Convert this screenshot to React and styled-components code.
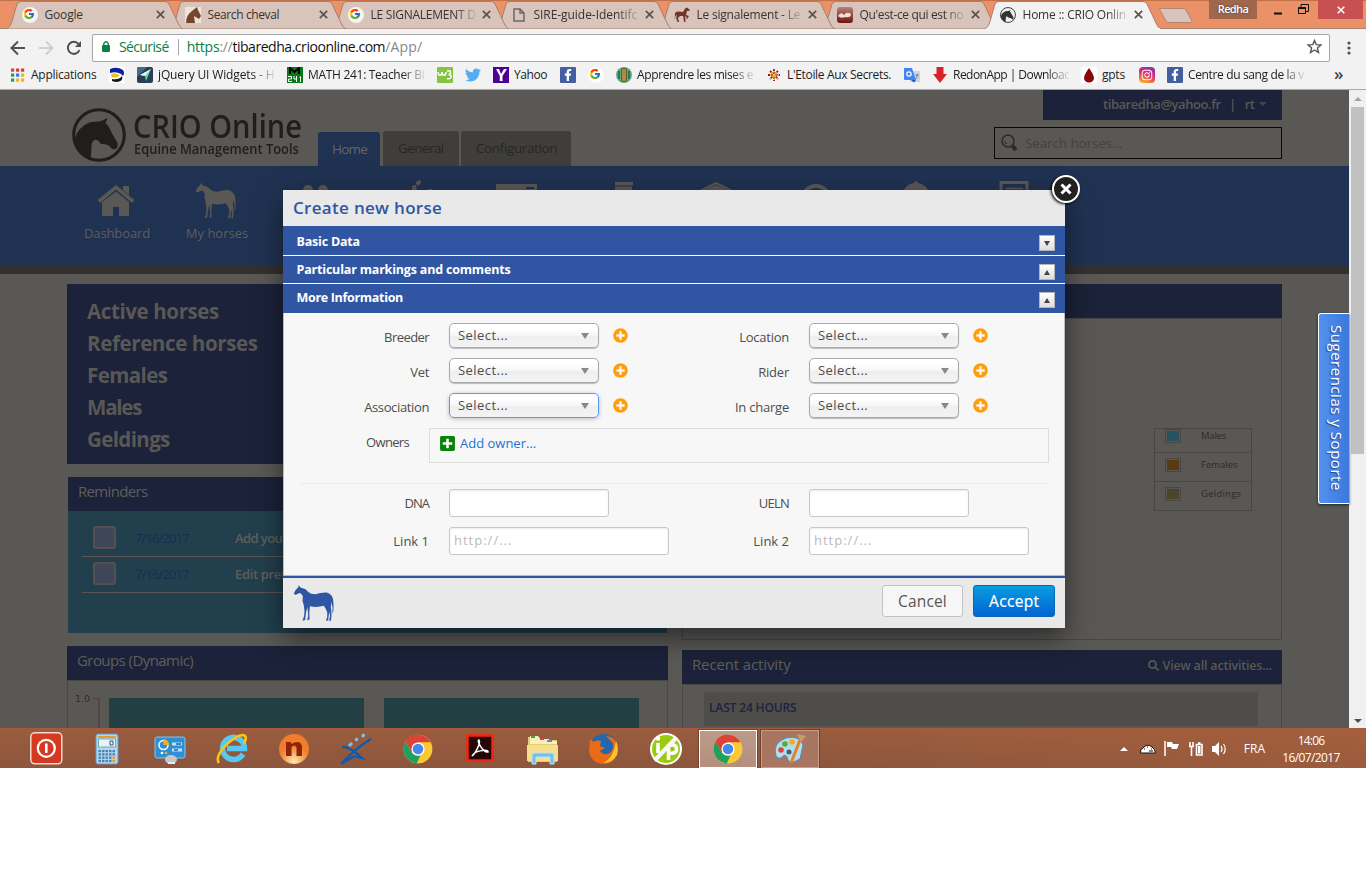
import React, { useLayoutEffect, useRef, useState } from 'react';
import styled, { createGlobalStyle, css } from 'styled-components';
import { FcGoogle } from 'react-icons/fc';
import { FaTwitter, FaFacebookF, FaPlusCircle, FaPlusSquare, FaSearch, FaInstagram } from 'react-icons/fa';

const Global = createGlobalStyle`
  * { box-sizing: border-box; }
  body { margin: 0; background: #fff; font-family: "Open Sans", "Noto Sans", sans-serif; }
  svg { display: block; flex: none; }
`;

/* ---------- text fitted to a known width ---------- */
const FitBox = styled.span`
  display: inline-block;
  white-space: nowrap;
  transform-origin: 0 50%;
`;
function Fit({ w, stretch, children }) {
  const ref = useRef(null);
  const [style, setStyle] = useState({});
  useLayoutEffect(() => {
    const natural = ref.current.offsetWidth;
    if (stretch) setStyle({ width: w, transform: `scaleX(${w / natural})` });
    else setStyle({ letterSpacing: `${(w - natural) / String(children).length}px` });
  }, []);
  return <FitBox ref={ref} style={style}>{children}</FitBox>;
}

/* ---------- drawings ---------- */
const Horse = ({ color, size = 40 }) => (
  <svg width={size} height={size * 0.9} viewBox="0 0 121 108" fill={color}>
    <path d="M17 0 L23 8 Q36 9 45 20 Q52 27 66 27 Q84 21 100 22 Q114 26 118 40 Q121 58 119 78 L116 84 Q118 66 114 50 Q110 64 113 76 Q115 92 112 105 L107 105 Q111 90 107 78 Q105 90 104 104 L97 105 Q103 94 101 80 Q96 68 91 61 Q70 67 50 62 L48 84 L49 101 L42 104 Q46 92 44 78 L42 65 L38 84 L36 103 L28 105 Q34 94 34 78 L32 60 Q26 46 29 33 Q25 24 20 23 L8 28 L2 26 Q6 13 15 7 Z" />
  </svg>
);
const HeadLogo = ({ size, dark, bg }) => (
  <svg width={size} height={size} viewBox="218 60 158 158">
    <circle cx="297" cy="139" r="74" fill={bg} stroke={dark} strokeWidth="9" />
    <path fill={dark} d="M226 150 Q236 116 270 102 L302 99 L322 89 L316 104 Q326 112 336 136 L351 162 Q353 176 346 180 Q336 184 328 172 Q316 163 303 166 Q292 150 282 154 Q274 162 275 176 L273 208 Q232 196 226 150Z" />
  </svg>
);
const Chrome = ({ size = 30 }) => (
  <svg width={size} height={size} viewBox="0 0 48 48">
    <circle cx="24" cy="24" r="23" fill="#fcc934" />
    <path d="M24 1 A23 23 0 0 1 44 13 L24 13 L14 30 L4 12.500 A23 23 0 0 1 24 1Z" fill="#dc4237" />
    <path d="M4 12.500 L14 29.500 Q19 36 28 34.500 L22 47 A23 23 0 0 1 4 12.500Z" fill="#1da15f" />
    <circle cx="24" cy="24" r="10.500" fill="#fff" />
    <circle cx="24" cy="24" r="8.500" fill="#4688f1" />
  </svg>
);

/* ---------- title bar ---------- */
const Screen = styled.div`width: 1366px; height: 768px; display: flex; flex-direction: column; overflow: hidden;`;
const TitleBar = styled.div`
  height: 29px; flex: none; display: flex; background: #ea9168; padding-left: 7px;
  border-top: 1px solid #c4714b; box-shadow: inset 0 -1px #a58472;
`;
const TabBox = styled.div`
  width: 177px; height: 28px; margin-right: -14px; display: grid; flex: none; z-index: ${p => p.$z};
  > * { grid-area: 1 / 1; }
`;
const TabInner = styled.div`
  display: flex; align-items: center; padding: 0 0 1px 15px; font-size: 12px; color: #3a3330; height: 28px; min-width: 0;
`;
const TabIcon = styled.span`width: 16px; height: 16px; margin-right: 6.500px; display: grid; place-items: center; flex: none;`;
const Fade = styled.span`
  width: ${p => p.$w}px; overflow: hidden; white-space: nowrap; flex: none;
  ${p => p.$fade && css`mask-image: linear-gradient(90deg, #000 80%, transparent 102%);`}
`;
const TabTitle = styled(Fade)`margin-right: 6px;`;
const CloseX = ({ color = '#5c5350', size = 9 }) => (
  <svg width={size} height={size} viewBox="0 0 9 9" stroke={color} strokeWidth="1.700"><path d="M.8 .8L8.200 8.200M8.200 .8L.8 8.200" /></svg>
);
const Tab = ({ icon, text, w, fade, active, z }) => (
  <TabBox $z={z}>
    <svg width="177" height="28" viewBox="0 0 177 28">
      <path d="M0 28 Q3 26 4.500 22 L10 3 Q11 .5 14 .5 L158 .5 Q161 .5 162 3 L171 22 Q173 27 176 28Z" fill={active ? '#f2f2f2' : '#d8c4ba'} stroke="#a97f6a" strokeWidth="1" />
      {active && <path d="M1 28H175" stroke="#f2f2f2" strokeWidth="2" />}
    </svg>
    <TabInner>
      <TabIcon>{icon}</TabIcon>
      <TabTitle $w={105} $fade={fade}><Fit w={w}>{text}</Fit></TabTitle>
      <CloseX />
    </TabInner>
  </TabBox>
);
const Controls = styled.div`margin-left: auto; display: flex; align-items: flex-start; height: 19px; padding-right: 3px;`;
const NewTab = styled.div`margin: 6px 0 0 10px; z-index: 0;`;
const UserTag = styled.div`
  width: 48px; height: 19px; margin-top: -1px; background: #9f674c; color: #fff; font-size: 11px; font-weight: 600;
  text-align: center; line-height: 18px; text-shadow: 0 0 2px #333;
`;
const WinButton = styled.div`
  width: ${p => p.$w}px; height: 19px; margin-top: -1px; display: grid; place-items: center ${p => p.$align || 'center'}; background: ${p => p.$bg || 'transparent'};
`;
const GoogleIcon = ({ size = 16 }) => (
  <svg width={size} height={size} viewBox="0 0 16 16"><circle cx="8" cy="8" r="8" fill="#fff" opacity=".8" /><FcGoogle x="1" y="1" width="14" height="14" /></svg>
);

/* ---------- tool bar & bookmarks ---------- */
const Toolbar = styled.div`
  height: 34px; flex: none; background: #f2f2f2; display: flex; align-items: center; padding: 3px 0 0 10px;
`;
const NavIcons = styled.div`display: flex; gap: 12px; width: 82px; align-items: center;`;
const Omnibox = styled.div`
  width: 1238px; height: 28px; border: 1px solid #a6a6a6; border-radius: 2px; background: #fff; display: flex; align-items: center;
  padding: 0 7px 2px 8px; font-size: 14px; color: #111;
  i { width: 1px; height: 16px; background: #a5a5a5; margin: 0 8px 0 9px; }
  em { font-style: normal; color: #0b8043; }
  small { font-size: 14px; color: #888; }
  > svg:last-child { margin-left: auto; }
`;
const Lock = styled.span`margin-right: 8px;`;
const Menu = styled.div`margin-left: 17px;`;
const Bookmarks = styled.div`
  height: 27px; flex: none; background: #f2f2f2; border-bottom: 1px solid #a9a9a9; display: flex; align-items: center; gap: 12px;
  padding: 0 0 3px 10px; font-size: 12px; color: #1d1d1d;
`;
const Bookmark = styled.div`display: flex; align-items: center; gap: 5px; flex: none;`;
const Tile = styled.span`
  width: 16px; height: 16px; flex: none; display: grid; place-items: center; overflow: hidden;
  background: ${p => p.$bg || 'transparent'}; border-radius: ${p => p.$r || 0}px; color: #fff;
`;
const More = styled.span`margin-left: 17px; font-size: 17px; line-height: 16px; padding-bottom: 2px; color: #444; font-weight: 600;`;

const Apps = () => (
  <svg width="16" height="16" viewBox="0 0 16 16">
    {['#e33b2e', '#e33b2e', '#e33b2e', '#1d9f56', '#3b79e0', '#f2b60f', '#1d9f56', '#f2b60f', '#f2b60f'].map((c, i) => (
      <rect key={i} x={1 + (i % 3) * 5} y={1.500 + Math.floor(i / 3) * 5} width="3.200" height="3.200" fill={c} />
    ))}
  </svg>
);
const bookmarks = [
  { icon: <Apps />, text: 'Applications', w: 65, box: 66 },
  { icon: <Tile $bg="#fff"><svg width="16" height="16"><path d="M1 2Q8 -1 14 3Q16 6 14 9L12 7Q7 4 1 6Z" fill="#0b1fa0" /><path d="M2 7Q8 5 11 9L6 11Q4 9 3 11Z" fill="#e8c319" /><path d="M3 12Q10 13 13 9Q15 14 8 15Q5 15 3 14Z" fill="#161616" /></svg></Tile> },
  { icon: <Tile $bg="#2b3d52" $r={2}><svg width="16" height="16"><path d="M0 0H10L0 10Z" fill="#426c8f" /><path d="M3 8L14 2L9 14L8 9Z" fill="#62d99b" /><path d="M3 8L14 2L8 9Z" fill="#eef" /></svg></Tile>, text: 'jQuery UI Widgets - H', w: 116, box: 117, fade: 1 },
  { icon: <Tile $bg="#087a15"><svg width="16" height="16" fill="none" stroke="#fff"><path d="M3 7V1L7.500 5L12 1V7" stroke="#000" strokeWidth="2" /><path d="M1 9.500H4.500V12H1.500V14.500H5M7 9V12H10M9.500 9V15M12.500 10.500L13.500 9.500V15" /></svg></Tile>, text: 'MATH 241: Teacher Bi', w: 116, box: 117, fade: 1 },
  { icon: <Tile $bg="#84c440" $r={1}><svg width="16" height="16" fill="none" stroke="#fff" strokeWidth="1.500"><path d="M1 5Q1.500 9 3.500 8Q5 8 5 5Q5.500 9 7.500 8Q9 8 9 5M10 4Q14 3 13.500 6Q13 7.500 11.500 7.500Q15 8 14 10.500Q13 12.500 10 11.500" /></svg></Tile> },
  { icon: <FaTwitter size={16} color="#55acee" /> },
  { icon: <Tile $bg="#4b0096"><svg width="16" height="16"><path d="M3 2H6L8 7L11 2H14L9.500 9V14H6.800V9Z" fill="#fff" /></svg></Tile>, text: 'Yahoo', w: 33, box: 34 },
  { icon: <Tile $bg="#435f9f" $r={1}><FaFacebookF size={12} /></Tile> },
  { icon: <GoogleIcon /> },
  { icon: <Tile $bg="#5aac87" $r={8}><svg width="16" height="16"><path d="M3 4V12M13 4V12" stroke="#2b5a4c" strokeWidth="1.500" /><rect x="5.500" y="1.500" width="5" height="13" rx="1.500" fill="#a98f3f" stroke="#6b5c28" /></svg></Tile>, text: 'Apprendre les mises e', w: 116, box: 117, fade: 1 },
  { icon: <svg width="16" height="16" viewBox="0 0 16 16"><path d="M8 2V14M2 8H14M4 4L12 12M12 4L4 12" stroke="#a01616" strokeWidth="1.800" strokeDasharray="2 .7" /><path d="M8 4V12M4 8H12M6 6L10 10M10 6L6 10" stroke="#ecc319" /></svg>, text: "L'Etoile Aux Secrets.", w: 104, box: 105 },
  { icon: <svg width="16" height="16"><rect x="6" y="4" width="10" height="11" fill="#d0d4da" /><path d="M0 1H8L12 13H1Q0 13 0 12Z" fill="#4285f4" /><path d="M7 13H12L10 15.500Z" fill="#1c56c4" /><circle cx="5" cy="7" r="2.200" fill="none" stroke="#fff" strokeWidth="1.200" /><path d="M11.500 8H15M13 7Q14 10 11.500 12" stroke="#6d7f9c" fill="none" /></svg> },
  { icon: <svg width="16" height="16"><path d="M4.500 0H11.500V7H15L8 16L1 7H4.500Z" fill="#d8232a" /></svg>, text: 'RedonApp | Download', w: 118, box: 116, fade: 1 },
  { icon: <Tile $bg="#fff"><svg width="16" height="16"><path d="M8 1Q13 8 13 11A5 4.500 0 0 1 3 11Q3 8 8 1Z" fill="#8c0707" /></svg></Tile>, text: 'gpts', w: 23, box: 25 },
  { icon: <Tile $bg="linear-gradient(200deg,#8134af 5%,#dd2a7b 45%,#f58529 80%,#fbd34f)" $r={4}><FaInstagram size={12} /></Tile> },
  { icon: <Tile $bg="#435f9f" $r={1}><FaFacebookF size={12} /></Tile>, text: 'Centre du sang de la v', w: 116, box: 117, fade: 1 },
];

/* ---------- web page ---------- */
const dim = '#5a5855';
const navy = '#1b2239';
const Viewport = styled.div`height: 638px; flex: none; display: flex; position: relative; overflow: hidden;`;
const Page = styled.div`width: 1349px; height: 638px; overflow: hidden; background: ${dim}; color: #2b2826;`;
const Header = styled.div`height: 76px; padding: 0 67px 0 72px; display: flex; align-items: flex-end;`;
const Brand = styled.div`display: flex; gap: 7px; width: 246px; height: 59px; color: #201e1c; > svg { margin-top: .5px; }`;
const BrandText = styled.div`
  display: flex; flex-direction: column;
`;
const BrandName = styled.div`font-size: 33px; line-height: 33px; font-weight: 600; height: 33px; padding-top: 2px;`;
const BrandLine = styled.div`font-weight: 600; font-size: 15px; line-height: 17px; padding-left: 1px;`;
const PageTab = styled.div`
  height: ${p => (p.$on ? 34 : 35)}px; width: ${p => p.$w}px; margin-right: ${p => p.$gap || 0}px; padding-left: ${p => p.$pad || 14}px;
  border-radius: 3px 3px 0 0; font-size: 13.500px; line-height: 34px; background: ${p => (p.$on ? '#203252' : '#403e3c')}; color: ${p => (p.$on ? '#676562' : '#292624')};
`;
const Right = styled.div`margin-left: auto; height: 76px; display: flex; flex-direction: column; align-items: flex-end; gap: 7px;`;
const UserBar = styled.div`
  width: 239px; height: 30px; background: ${navy}; color: ${dim}; font-size: 13px; font-weight: 600; display: flex; align-items: center; padding: 0 0 2px 60px;
  i { margin: 0 8.500px; font-style: normal; }
  u { margin-left: 5px; border: 4px solid transparent; border-top-color: #3f4659; border-bottom: 0; }
`;
const Search = styled.div`
  width: 288px; height: 32px; border: 1px solid #080808; display: flex; align-items: center; gap: 7px; padding-left: 6px; font-size: 13.500px; color: #444140;
`;
const NavBar = styled.div`
  height: 108px; background: #203252; border-bottom: 9px solid #33312f; display: flex; padding: 14px 0 0 67px;
`;
const NavItem = styled.div`
  width: 100px; display: flex; flex-direction: column; align-items: center; color: #5f5d5b; font-size: 13px;
  svg { height: 42px; margin-left: -3px; } span { line-height: 22px; }
`;
const Main = styled.div`display: flex; gap: 14px; padding: 10px 67px 0 67px;`;
const Column = styled.div`width: ${p => p.$w}px; display: flex; flex-direction: column; flex: none;`;
const Stats = styled.div`
  height: 180px; background: ${navy}; color: ${dim}; font-weight: 700; font-size: 20.500px; line-height: 32px; padding: 11px 20px 0; display: flex; flex-direction: column;
`;
const Panel = styled.div`margin: ${p => p.$m || 0}; display: flex; flex-direction: column;`;
const PanelHead = styled.div`
  height: 34px; background: ${navy}; color: #605e5d; font-size: 15px; line-height: 29px; padding: 0 10px; display: flex; justify-content: space-between;
`;
const ReminderBody = styled.div`height: 122px; background: #213f4d; padding: 10px 14px;`;
const ReminderRow = styled.div`
  height: 36px; border-bottom: 1px solid #5c5450; display: flex; align-items: center; font-size: 13px; color: #605e5c; font-weight: 600; padding-bottom: 2px;
  time { width: 100px; margin-left: 19px; color: #142f55; font-weight: 400; }
`;
const Check = styled.span`width: 23px; height: 23px; border: 2px solid #55504e; border-radius: 3px; background: #3f4658; margin-left: 11px;`;
const PanelBody = styled.div`height: ${p => p.$h}px; border: 1px solid #494644; padding: ${p => p.$pad || 0}; display: flex;`;
const Axis = styled.div`
  font-size: 9.500px; line-height: 12px; color: #302d2c; width: 18px; display: flex; align-items: flex-start; font-family: "DejaVu Sans", sans-serif; margin-top: -5px; flex: none;
`;
const AxisLine = styled.div`width: 7px; border-top: 1px solid #444; border-right: 2px solid #4c4947; height: 80px; margin-right: 9px; flex: none;`;
const Bar = styled.div`width: 255px; height: 80px; background: #233f44; margin-right: 20px; flex: none;`;
const Legend = styled.div`
  width: 98px; height: 83px; margin: 109px 0 0 471px; border: 1px solid #484543; font-size: 9.500px; color: #2d2a29; display: flex; flex-direction: column;
`;
const LegendRow = styled.div`
  height: ${p => p.$h}px; border-bottom: ${p => (p.$last ? 0 : 1)}px solid #484543; display: flex; align-items: ${p => p.$first ? 'flex-start' : 'center'}; padding: 0 0 ${p => p.$first ? 0 : 5}px 10px; flex: none;
  i { width: 16px; height: 14px; border: 1px solid #484543; padding: 1px; background: ${p => p.$c}; background-clip: content-box; margin-right: 20px; margin-top: ${p => (p.$first ? 0 : 1)}px; flex: none; }
  span { line-height: 14px; }
`;
const ViewAll = styled.span`display: flex; gap: 4px; align-items: center; font-size: 12.500px; font-weight: 600; color: #5a5855; height: 31px;`;
const Last = styled.div`width: 554px; height: 34px; background: #4f4d4a; color: #1d2340; font-size: 12px; font-weight: 600; line-height: 31px; padding-left: 5px;`;

const ScrollBar = styled.div`
  width: 17px; height: 638px; background: #f0f0f0; display: flex; flex-direction: column; align-items: center; padding: 7px 0 5px;
  i { width: 13px; height: 347px; background: #c1c1c1; margin: 6px 0 auto 0; }
`;
const Arrow = styled.b`
  border: 4px solid transparent; ${p => (p.$up ? `border-bottom-color:${p.$c};border-top:0` : `border-top-color:${p.$c};border-bottom:0`)};
`;
const SupportTab = styled.div`
  position: absolute; left: 1318px; top: 223px; width: 31px; height: 191px; background: linear-gradient(90deg, #5292ee, #3c78dd);
  border: 1px solid #fff; border-right: 0; border-radius: 3px 0 0 3px; writing-mode: vertical-rl; color: #fff; font-size: 15px; line-height: 28px; padding-top: 11px;
  box-shadow: 0 1px 3px #222; text-shadow: 1px 1px 1px #244a8c;
  > div { writing-mode: horizontal-tb; transform: rotate(90deg); transform-origin: 0 0; width: 170px; height: 28px; margin-right: -172px; }
`;

/* ---------- dialog ---------- */
const Dialog = styled.div`
  position: absolute; left: 283px; top: 100px; width: 782px; height: 438px; background: #e9e9e9; box-shadow: 0 10px 25px rgba(0, 0, 0, .5); color: #4d4d4d; font-size: 13px;
`;
const Title = styled.div`height: 36px; padding-left: 10px; line-height: 35px; color: #3056a3; font-size: 17px; font-weight: 600;`;
const Section = styled.div`
  height: ${p => p.$h}px; background: #3056a3; color: #fff; font-weight: 700; font-size: 12.500px; border-bottom: ${p => (p.$line ? 1 : 0)}px solid #fff;
  padding: 0 10px 0 13.500px; display: flex; justify-content: space-between; line-height: ${p => p.$lh}px;
`;
const Toggle = styled.span`
  width: 16px; height: 16px; margin-top: ${p => p.$mt}px; border: 1px solid #b5b5b5; background: linear-gradient(#fff, #dedede); display: grid; place-items: center;
  b { border: 3px solid transparent; ${p => (p.$up ? 'border-bottom: 5px solid #444; border-top: 0' : 'border-top: 5px solid #444; border-bottom: 0')}; }
`;
const Body = styled.div`height: 263px; background: #f7f7f7; border: 1px solid #bbb; border-top: 0; padding-top: 10px;`;
const FormRow = styled.div`
  display: grid; grid-template-columns: 145px 220px 100px 220px; column-gap: 20px; height: ${p => p.$h}px;
  label { text-align: right; line-height: 28px; }
`;
const Control = styled.div`display: flex; align-items: flex-start; gap: 14px;`;
const Select = styled.div`
  width: 150px; height: 25px; border: 1px solid ${p => (p.$focus ? '#5897fb' : '#aaa')}; border-radius: 5px; padding: 0 9px 0 8px; line-height: 23px;
  background: linear-gradient(#fff 20%, #f6f6f6 50%, #eee 52%, #f4f4f4 100%); box-shadow: 0 1px ${p => (p.$focus ? 4 : 1)}px rgba(0, 0, 0, .25); display: flex; justify-content: space-between; align-items: center;
  i { border: 4px solid transparent; border-top: 6px solid #888; border-bottom: 0; }
`;
const Plus = styled.span`margin-top: 5px; color: #ff9d0a;`;
const Input = styled.div`
  width: ${p => p.$w}px; height: 28px; border: 1px solid #c8c8c8; border-radius: 3px; background: #fff; box-shadow: inset 0 1px 2px rgba(0, 0, 0, .08); color: #bbb; padding-left: 4px; line-height: 25px;
`;
const OwnersRow = styled.div`display: flex; height: 35px; label { width: 125px; text-align: right; margin-right: 20px; line-height: 28px; }`;
const Owners = styled.div`
  width: 620px; height: 35px; border: 1px solid #ddd; padding: 6px 0 0 9px; color: #1a73d2; display: flex; align-items: flex-start; gap: 4px; line-height: 17px;
`;
const Rule = styled.div`margin: 20px 15px 5px; border-top: 1px solid #ececec;`;
const Footer = styled.div`
  height: 52px; border-top: 2px solid #3056a3; display: flex; padding: 7px 10px 0 10px; gap: 10px;
  > svg { margin: 0 auto 0 0; }
`;
const Button = styled.div`
  width: ${p => (p.$primary ? 82 : 81)}px; height: 32px; border-radius: 3px; font-size: 15.500px; line-height: 31px; padding-left: 15px;
  ${p => (p.$primary
    ? css`background: linear-gradient(#0a9ce0, #0065d3); border: 1px solid #0768b9; color: #fff; -webkit-text-stroke: .2px #fff;`
    : css`background: #f6f6f6; border: 1px solid #c2c2c2; color: #555;`)}
`;
const CloseButton = styled.div`
  position: absolute; left: 769px; top: -15px; width: 28px; height: 28px; border-radius: 50%; background: #212121; border: 2px solid #fff; box-shadow: -1px 1px 3px #000; display: grid; place-items: center;
`;
const Field = ({ label, w, focus }) => (
  <>
    <label><Fit w={w}>{label}</Fit></label>
    <Control><Select $focus={focus}><Fit w={50}>Select...</Fit><i /></Select><Plus><FaPlusCircle size={15} /></Plus></Control>
  </>
);

/* ---------- task bar ---------- */
const TaskBar = styled.div`
  height: 40px; flex: none; background: linear-gradient(90deg, rgba(176, 98, 60, 0) 60%, rgba(176, 98, 60, .45)), linear-gradient(#9b5c3e, #8c563d); border-top: 1px solid #a45a3b; display: flex; align-items: center; padding-left: 15px;
`;
const Task = styled.div`
  width: 62px; height: 39px; display: flex; align-items: center; justify-content: center; flex: none;
  ${p => p.$box && css`
    width: 58px; height: 38px; margin: 0 4px 0 ${p.$first ? 2 : 0}px; border: 1px solid ${p.$on ? '#fff' : '#c59f8c'}; outline: 1px solid #70422e; outline-offset: 0;
    background: ${p.$on ? 'linear-gradient(#bc9b8b, #b58e7c)' : '#a87660'};
  `}
`;
const Tray = styled.div`
  margin-left: auto; display: flex; align-items: center; color: #fff; font-size: 12px;
`;
const Clock = styled.div`width: 60px; line-height: 17px; margin-right: 25px; display: flex; flex-direction: column; align-items: center;`;
const Language = styled.div`margin: 0 16px 0 12px; line-height: 17px;`;
const TrayIcon = styled.span`width: 24px; display: grid; place-items: center;`;

const tasks = [
  <svg width="33" height="33"><rect x=".8" y=".8" width="31" height="31" rx="4" fill="#d33a21" stroke="#f4d9d0" strokeWidth="1.500" /><circle cx="16.300" cy="16.300" r="8.500" fill="none" stroke="#fff" strokeWidth="2.200" /><path d="M16.300 11.500V21" stroke="#fff" strokeWidth="2.600" /></svg>,
  <svg width="32" height="32" viewBox="-3 0 32 32"><rect x="1" y="1" width="22" height="30" rx="2" fill="#b3d7ef" stroke="#5c9cca" /><rect x="3" y="3" width="18" height="2" fill="#ef9b2c" /><rect x="3.500" y="6" width="17" height="8" fill="#e8f5f8" stroke="#7aa" /><path d="M15 8H18V12H15Z" fill="none" stroke="#357" />{[0, 1, 2, 3, 4].map(c => [0, 1, 2, 3].map(r => <rect key={c + '-' + r} x={3.500 + c * 3.500} y={17 + r * 3.300} width="2.500" height="2.200" fill={c === 4 && r > 1 ? '#f19422' : '#4b82ae'} />))}</svg>,
  <svg width="32" height="32"><rect x="1" y="4" width="30" height="21" rx="2" fill="#2d90d2" stroke="#83c6ee" /><circle cx="9.500" cy="12" r="4.500" fill="none" stroke="#fff" strokeWidth="1.500" /><path d="M9.500 12V6A6 6 0 0 1 15 12Z" fill="#f8aa29" /><path d="M18 11H28M18 17H28" stroke="#b9e5ff" strokeWidth="3" /><path d="M22 11H27M20 17H24" stroke="#1464a0" strokeWidth="1.500" /><circle cx="8" cy="20" r="1.300" fill="#fff" /><circle cx="12" cy="20" r="1.300" fill="#f8aa29" /><ellipse cx="17" cy="26.500" rx="6" ry="4.500" fill="#c5c8ca" /><path d="M14 30H21" stroke="#eee" strokeWidth="2" /></svg>,
  <svg width="32" height="32"><path d="M27 21A11 11 0 1 1 28.500 15.500H11" fill="none" stroke="#55c8f3" strokeWidth="5.500" /><path d="M3 30Q-1 25 8 14Q20 2 27 2Q32 3 28 11" fill="none" stroke="#f8c516" strokeWidth="2.600" /></svg>,
  <svg width="32" height="32"><defs><radialGradient id="n" cx=".5" cy=".9"><stop offset="0" stopColor="#ffe6b0" /><stop offset="1" stopColor="#f17c2b" /></radialGradient></defs><circle cx="16" cy="16" r="15" fill="url(#n)" /><path d="M8 23V9H13V11Q22 6 24 13V23H18.500V14Q16 11 13.500 14V23Z" fill="#8e2509" /></svg>,
  <svg width="34" height="32" fill="none" stroke="#0e5ab0" strokeWidth="2.200"><path d="M3 14Q10 13 23 25L14 23M32 6Q18 14 2 31L14 24" /><path d="M10 13L13 10M17 8L18 5M23.500 4L25 1" stroke="#7bc4f2" strokeWidth="3" /></svg>,
  <Chrome />,
  <svg width="30" height="32"><rect x="2.500" y="2.500" width="25" height="25" fill="#260606" stroke="#f52411" strokeWidth="2.500" /><path d="M7 23C11 20 16 9 14 7C11 7 18 20 23 19C24 16 10 17 7 23Z" fill="none" stroke="#fff" strokeWidth="1.500" /></svg>,
  <svg width="33" height="32"><path d="M2 4H13L15 7H31V29H2Z" fill="#e6cb71" /><path d="M4 3H12L14 6H23L24 8H31V11H4Z" fill="#f9efbd" /><rect x="5" y="3" width="4" height="2" fill="#37a934" /><rect x="14" y="5" width="4" height="2" fill="#d34838" /><rect x="21" y="7" width="5" height="2" fill="#4096e3" /><path d="M1 12H32V28H1Z" fill="#f4df91" /><path d="M6 31V22Q6 20 8 20H26Q28 20 28 22V31H24V24H10V31Z" fill="#76bfe6" stroke="#b9e4fa" /></svg>,
  <svg width="32" height="32"><circle cx="16" cy="15" r="14" fill="#2567af" /><path d="M18 3Q30 4 30 17Q28 31 15 31Q3 30 1 18L2 6L6 9Q9 6 13 8L12 13L17 15L12 18Q15 23 22 20Q27 15 24 9Z" fill="#ea6a17" /><path d="M28 8Q31 14 29 22Q24 30 16 30Q26 24 28 8" fill="#f9c62d" /></svg>,
  <svg width="34" height="34"><circle cx="17" cy="17" r="16" fill="#fff" /><circle cx="17" cy="17" r="14" fill="#9aca12" /><path d="M9 11V21M19.500 12V28M19.500 13.500Q28 11 27.500 18Q27 22 20 21" stroke="#fff" fill="none" strokeWidth="3.600" /><circle cx="9" cy="6.500" r="2.200" fill="#fff" /><path d="M4 27L26 4L29 7L7 30Z" fill="#f8f8f8" /></svg>,
];

export default function App() {
  return (
    <Screen>
      <Global />
      <TitleBar>
        <Tab z={9} icon={<GoogleIcon />} text="Google" w={38} />
        <Tab z={8} icon={<Tile $bg="#eee3dc"><svg width="16" height="16"><path d="M1 16Q1 8 7 4L12 0L13 3L16 9L14 12L9 9L10 16Z" fill="#77442e" /></svg></Tile>} text="Search cheval" w={72} />
        <Tab z={7} icon={<GoogleIcon />} text="LE SIGNALEMENT D" w={105} fade />
        <Tab z={6} icon={<svg width="12" height="14" fill="none" stroke="#6f6662" strokeWidth="1.500"><path d="M1 1H7L11 5V13H1ZM7 1V5H11" /></svg>} text="SIRE-guide-Identifc" w={104} fade />
        <Tab z={5} icon={<svg width="16" height="15" viewBox="0 0 16 15" fill="#74342a"><path d="M1 8Q0 5 4 4.500L9 5L11 1.500L13 .5L16 3L15 4L13 4L12 8L15 9L13 12L12 11.500L13 10L10 9L6 9L4 11L5 15H3.500L2 11L3 8L1.500 9L.5 13Z" /><path d="M9 8L10 15H11.500L11 8" /></svg>} text="Le signalement - Le" w={104} fade />
        <Tab z={4} icon={<Tile $bg="linear-gradient(#b98178,#6b150f)" $r={3}><svg width="14" height="8"><path d="M0 5Q3 0 6 4Q9 0 13 3Q13 7 7 6Q3 8 0 5Z" fill="#f0ded8" /></svg></Tile>} text="Qu'est-ce qui est no" w={104} fade />
        <Tab z={12} active icon={<HeadLogo size={16} dark="#333" bg="#eee" />} text="Home :: CRIO Onlin" w={103} fade />
        <NewTab><svg width="37" height="17"><path d="M2 1.500H25Q27 1.500 28 3L34 14Q34 15.500 32 15.500H12Q9 15.500 8 14L2 3Q1 1.500 2 1.500Z" fill="#d8c4ba" stroke="#b48670" /></svg></NewTab>
        <Controls>
          <UserTag><Fit w={31}>Redha</Fit></UserTag>
          <WinButton $w={41}><svg width="10" height="10"><path d="M1 8.500H9" stroke="#111" strokeWidth="2" /></svg></WinButton>
          <WinButton $w={20} $align="start"><svg width="11" height="11" fill="none" stroke="#111"><path d="M.5 3.500H7.500V9.500H.5ZM3 3V.5H10.500V7.500H8M.5 4.500H7.500" /></svg></WinButton>
          <WinButton $w={45} $bg="#c75050"><CloseX color="#fff" size={8} /></WinButton>
        </Controls>
      </TitleBar>
      <Toolbar>
        <NavIcons>
          <svg width="16" height="16" fill="none" stroke="#505050" strokeWidth="2"><path d="M15 8H2M8 1.500L1.500 8L8 14.500" /></svg>
          <svg width="16" height="16" fill="none" stroke="#cfcfcf" strokeWidth="2"><path d="M1 8H14M8 1.500L14.500 8L8 14.500" /></svg>
          <svg width="16" height="16" fill="none" stroke="#505050" strokeWidth="2"><path d="M13.500 10A6 6 0 1 1 12.500 4" /><path d="M15 1V7H9Z" fill="#505050" stroke="none" /></svg>
        </NavIcons>
        <Omnibox>
          <Lock><svg width="10" height="13"><rect x="1" y="5" width="8" height="7" rx="1" fill="#0b8043" /><path d="M2.800 6V3.500Q5 0 7.200 3.500V6" fill="none" stroke="#0b8043" strokeWidth="1.400" /></svg></Lock>
          <em><Fit w={50}>Sécurisé</Fit></em><i />
          <em><Fit w={33}>https</Fit></em><small><Fit w={13}>://</Fit></small><Fit w={153}>tibaredha.crioonline.com</Fit><small><Fit w={37}>/App/</Fit></small>
          <svg width="15" height="15" viewBox="0 0 15 15" fill="none" stroke="#555" strokeWidth="1.400"><path d="M7.500 1.500L9.300 5.700L14 6L10.400 9L11.500 13.500L7.500 11L3.500 13.500L4.600 9L1 6L5.700 5.700Z" /></svg>
        </Omnibox>
        <Menu><svg width="4" height="14" fill="#505050"><circle cx="2" cy="2" r="1.600" /><circle cx="2" cy="7" r="1.600" /><circle cx="2" cy="12" r="1.600" /></svg></Menu>
      </Toolbar>
      <Bookmarks>
        {bookmarks.map((b, i) => (
          <Bookmark key={i}>{b.icon}{b.text && <Fade $w={b.box || b.w} $fade={b.fade}><Fit w={b.w}>{b.text}</Fit></Fade>}</Bookmark>
        ))}
        <More>»</More>
      </Bookmarks>

      <Viewport>
        <Page>
          <Header>
            <Brand>
              <HeadLogo size={54} dark="#201e1c" bg="#5a5855" />
              <BrandText>
                <BrandName><Fit w={169} stretch>CRIO Online</Fit></BrandName>
                <BrandLine><Fit w={165} stretch>Equine Management Tools</Fit></BrandLine>
              </BrandText>
            </Brand>
            <PageTab $on $w={62} $gap={3}><Fit w={35}>Home</Fit></PageTab>
            <PageTab $w={76} $gap={2} $pad={15}><Fit w={46}>General</Fit></PageTab>
            <PageTab $w={110} $pad={15}><Fit w={81}>Configuration</Fit></PageTab>
            <Right>
              <UserBar><Fit w={118}>tibaredha@yahoo.fr</Fit><i>|</i><Fit w={10}>rt</Fit><u /></UserBar>
              <Search>
                <svg width="17" height="18" fill="none" stroke="#2b2827"><circle cx="7" cy="7" r="6" strokeWidth="1.500" /><path d="M11.500 12L15 16" strokeWidth="4" /><path d="M3.500 7Q4 10 6 10" /></svg>
                <Fit w={97}>Search horses...</Fit>
              </Search>
            </Right>
          </Header>
          <NavBar>
            <NavItem>
              <svg width="40" height="42" fill={dim}><path d="M20 5L38.500 20L36 23L20 9.500L4 23L1.500 20L12 11.500ZM27 6H33V15L27 10Z" /><path d="M20 11.500L33 22V36H23V27H17V36H6V22Z" /></svg>
              <span><Fit w={66}>Dashboard</Fit></span>
            </NavItem>
            <NavItem>
              <Horse color={dim} size={41} />
              <span><Fit w={62}>My horses</Fit></span>
            </NavItem>
            <NavItem><svg width="40" height="40" fill={dim}><circle cx="12" cy="10" r="5" /><circle cx="27" cy="10" r="5" /></svg></NavItem>
            <NavItem><svg width="40" height="40" fill={dim}><path d="M20 2L24 0L25 3L22 6L20 4ZM16 6L20 5L21 12H16ZM32 9H36V12H32Z" /></svg></NavItem>
            <NavItem><svg width="44" height="40"><path d="M2 4H43V30H2Z" fill={dim} /><path d="M32 8H40" stroke="#203252" strokeWidth="2" /></svg></NavItem>
            <NavItem><svg width="34" height="40" fill={dim}><path d="M16 2H34V5.500H16ZM16 6.500H33V20H16Z" /></svg></NavItem>
            <NavItem><svg width="40" height="40" fill="none" stroke={dim} strokeWidth="2"><path d="M4 11L20 3L36 11" /><path d="M9 11L20 6L31 11Z" fill={dim} /></svg></NavItem>
            <NavItem><svg width="40" height="40"><circle cx="20" cy="20" r="14" fill="none" stroke={dim} strokeWidth="4" /><circle cx="20" cy="13" r="3" fill={dim} /></svg></NavItem>
            <NavItem><svg width="40" height="40" fill={dim}><path d="M5 16Q9 4 18 3Q20 -1 22 3Q32 5 35 16Z" /></svg></NavItem>
            <NavItem><svg width="40" height="40" fill="none" stroke={dim} strokeWidth="3"><path d="M5 2.500H31V30H5Z" /><path d="M10 8.500H27" strokeWidth="1.500" /></svg></NavItem>
          </NavBar>
          <Main>
            <Column $w={601}>
              <Stats>
                <span><Fit w={132}>Active horses</Fit></span>
                <span><Fit w={171}>Reference horses</Fit></span>
                <span><Fit w={80}>Females</Fit></span>
                <span><Fit w={54}>Males</Fit></span>
                <span><Fit w={83}>Geldings</Fit></span>
              </Stats>
              <Panel $m="13px 1px 0">
                <PanelHead><Fit w={69}>Reminders</Fit></PanelHead>
                <ReminderBody>
                  <ReminderRow><Check /><time><Fit w={54}>7/16/2017</Fit></time><Fit w={47}>Add you</Fit></ReminderRow>
                  <ReminderRow><Check /><time><Fit w={54}>7/16/2017</Fit></time><Fit w={50}>Edit pref</Fit></ReminderRow>
                </ReminderBody>
              </Panel>
              <Panel $m="13px 0 0">
                <PanelHead><Fit w={116}>Groups (Dynamic)</Fit></PanelHead>
                <PanelBody $h={60} $pad="17px 0 0 7px">
                  <Axis><Fit w={15}>1.0</Fit></Axis><AxisLine />
                  <Bar /><Bar />
                </PanelBody>
              </Panel>
            </Column>
            <Column $w={600}>
              <Panel>
                <PanelHead />
                <PanelBody $h={322}>
                  <Legend>
                    <LegendRow $h={24} $first $c="#28525c"><i /><span><Fit w={25}>Males</Fit></span></LegendRow>
                    <LegendRow $h={29} $c="#583b12"><i /><span><Fit w={37}>Females</Fit></span></LegendRow>
                    <LegendRow $h={28} $last $c="#4b442c"><i /><span><Fit w={40}>Geldings</Fit></span></LegendRow>
                  </Legend>
                </PanelBody>
              </Panel>
              <Panel $m="10px 0 0">
                <PanelHead><Fit w={99}>Recent activity</Fit><ViewAll><FaSearch size={11} /><Fit w={109}>View all activities...</Fit></ViewAll></PanelHead>
                <PanelBody $h={60} $pad="7px 0 0 21px"><Last><Fit w={87}>LAST 24 HOURS</Fit></Last></PanelBody>
              </Panel>
            </Column>
          </Main>
        </Page>
        <ScrollBar><Arrow $up $c="#a3a3a3" /><i /><Arrow $c="#505050" /></ScrollBar>
        <SupportTab><div><Fit w={166}>Sugerencias y Soporte</Fit></div></SupportTab>
        <Dialog>
          <CloseButton><svg width="12" height="12" stroke="#fff" strokeWidth="3"><path d="M1.500 1.500L10.500 10.500M10.500 1.500L1.500 10.500" /></svg></CloseButton>
          <Title><Fit w={149}>Create new horse</Fit></Title>
          <Section $h={30} $line $lh={31}><Fit w={63}>Basic Data</Fit><Toggle $mt={9}><b /></Toggle></Section>
          <Section $h={28} $line $lh={27}><Fit w={214}>Particular markings and comments</Fit><Toggle $up $mt={8}><b /></Toggle></Section>
          <Section $h={29} $lh={27}><Fit w={106}>More Information</Fit><Toggle $up $mt={8}><b /></Toggle></Section>
          <Body>
            <FormRow $h={35}><Field label="Breeder" w={45} /><Field label="Location" w={50} /></FormRow>
            <FormRow $h={35}><Field label="Vet" w={19} /><Field label="Rider" w={31} /></FormRow>
            <FormRow $h={35}><Field label="Association" w={65} focus /><Field label="In charge" w={54} /></FormRow>
            <OwnersRow>
              <label><Fit w={43}>Owners</Fit></label>
              <Owners><FaPlusSquare size={17} color="#078407" /><Fit w={76}>Add owner...</Fit></Owners>
            </OwnersRow>
            <Rule />
            <FormRow $h={38}><label><Fit w={24}>DNA</Fit></label><Input $w={160} /><label><Fit w={30}>UELN</Fit></label><Input $w={160} /></FormRow>
            <FormRow $h={28}>
              <label><Fit w={36}>Link 1</Fit></label><Input $w={220}><Fit w={58}>http://...</Fit></Input>
              <label><Fit w={36}>Link 2</Fit></label><Input $w={220}><Fit w={58}>http://...</Fit></Input>
            </FormRow>
          </Body>
          <Footer>
            <Horse color="#3056a3" size={41} />
            <Button><Fit w={49}>Cancel</Fit></Button>
            <Button $primary><Fit w={50}>Accept</Fit></Button>
          </Footer>
        </Dialog>
      </Viewport>

      <TaskBar>
        {tasks.map((t, i) => <Task key={i}>{t}</Task>)}
        <Task $box $first $on><Chrome /></Task>
        <Task $box><svg width="34" height="34"><path d="M3 24Q-1 11 13 6Q27 3 30 13L27 27Q15 34 14 25Q12 21 8 26Q5 27 3 24Z" fill="#b4dcef" stroke="#518caf" /><circle cx="8" cy="18" r="2.800" fill="#dd443c" /><circle cx="12" cy="12" r="2.800" fill="#59a934" /><circle cx="19" cy="10" r="2.800" fill="#f3ae20" /><circle cx="16" cy="20" r="2.500" fill="#38617e" /><path d="M18 31L27 8" stroke="#e68024" strokeWidth="3" /><path d="M24 2L33 4L28 10Z" fill="#c99d6a" /></svg></Task>
        <Tray>
          <TrayIcon><Arrow $up $c="#fff" /></TrayIcon>
          <TrayIcon><svg width="16" height="10"><path d="M.5 9Q0 5 3 4Q7 -1 12 3Q15 5 15.500 9Z" fill="#fff" stroke="#111" /><path d="M4 5H5M7 3H8M11 5H12M9 7H13" stroke="#111" /></svg></TrayIcon>
          <TrayIcon><svg width="17" height="17"><path d="M2 1V16" stroke="#fff" strokeWidth="1.500" /><path d="M4 2H9L10 4H16L14 9H9L8 7H4Z" fill="#fff" /></svg></TrayIcon>
          <TrayIcon><svg width="16" height="16" fill="none" stroke="#fff" strokeWidth="1.600"><path d="M2 1V5M5 1V5M1 5.500H6M3.500 6V15" /><path d="M8.500 3.500H14V14H8.500ZM10 2H12.500" /><path d="M10 5H12.500V12.500H10Z" fill="#fff" stroke="none" /></svg></TrayIcon>
          <TrayIcon><svg width="17" height="16"><path d="M1 5H4L8 1V15L4 11H1Z" fill="#fff" /><path d="M10 5Q12 8 10 11M12.500 3Q16 8 12.500 13" fill="none" stroke="#fff" strokeWidth="1.200" /></svg></TrayIcon>
          <Language><Fit w={21}>FRA</Fit></Language>
          <Clock><Fit w={27}>14:06</Fit><Fit w={58}>16/07/2017</Fit></Clock>
        </Tray>
      </TaskBar>
    </Screen>
  );
}
